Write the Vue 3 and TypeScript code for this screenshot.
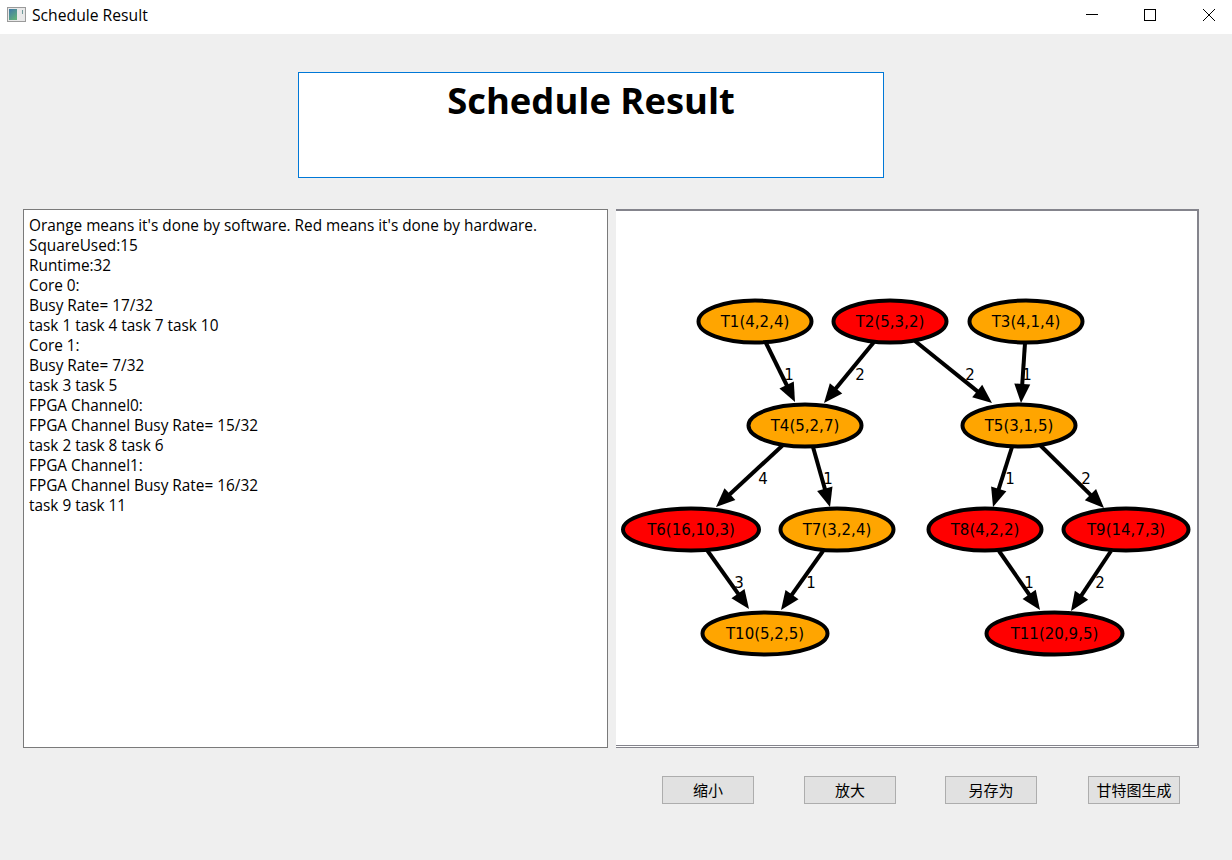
<template>
  <div class="window">
    <header class="titlebar">
      <svg class="app-icon" width="19" height="16" viewBox="0 0 19 16">
        <defs>
          <linearGradient id="appGrad" x1="0" y1="0" x2="0.6" y2="1">
            <stop offset="0" stop-color="#3f78a8" />
            <stop offset="1" stop-color="#5fae7c" />
          </linearGradient>
        </defs>
        <rect x="0.5" y="0.5" width="18" height="14" fill="#e8e8e8" stroke="#9a9a9a" />
        <rect x="2" y="2" width="8" height="11" fill="url(#appGrad)" />
        <rect x="15" y="3" width="1" height="4" fill="#6f9a9a" />
      </svg>
      <span class="window-title">Schedule Result</span>
      <div class="controls">
        <svg class="control" width="58" height="30" viewBox="0 0 58 30">
          <path d="M22 14.5h12" stroke="#000" fill="none" />
        </svg>
        <svg class="control" width="58" height="30" viewBox="0 0 58 30">
          <rect x="22.5" y="9.5" width="11" height="11" stroke="#000" fill="none" />
        </svg>
        <svg class="control" width="58" height="30" viewBox="0 0 58 30">
          <path d="M23 9l12 12M35 9l-12 12" stroke="#000" fill="none" />
        </svg>
      </div>
    </header>

    <main class="content">
      <div class="heading-box">
        <h1 class="heading">Schedule Result</h1>
      </div>

      <div class="panels">
        <div class="log">
          <div v-for="(line, i) in logLines" :key="i" class="log-line">{{ line }}</div>
        </div>
        <div class="graph">
          <svg width="581" height="534" viewBox="616 211 581 534">
            <g v-for="(e, i) in edgeShapes" :key="'e' + i">
              <line :x1="e.x1" :y1="e.y1" :x2="e.sx" :y2="e.sy" class="edge" />
              <polygon :points="e.head" fill="#000" />
              <text :x="e.lx" :y="e.ly" class="label">{{ e.label }}</text>
            </g>
            <g v-for="n in nodes" :key="n.name">
              <ellipse :cx="n.x" :cy="n.y" :rx="n.rx" ry="21" :fill="n.hw ? '#ff0000' : '#ffa500'" class="node" />
              <text :x="n.x" :y="n.y + 5.5" class="label">{{ n.name }}</text>
            </g>
          </svg>
        </div>
      </div>

      <div class="actions">
        <button class="btn">缩小</button>
        <button class="btn">放大</button>
        <button class="btn save">另存为</button>
        <button class="btn">甘特图生成</button>
      </div>
    </main>
  </div>
</template>

<script setup lang="ts">
interface GraphNode {
  name: string;
  x: number;
  y: number;
  rx: number;
  hw: boolean;
}

interface GraphEdge {
  x1: number;
  y1: number;
  x2: number;
  y2: number;
  lx: number;
  ly: number;
  label: string;
}

const logLines: string[] = [
  "Orange means it's done by software. Red means it's done by hardware.",
  'SquareUsed:15',
  'Runtime:32',
  'Core 0:',
  'Busy Rate= 17/32',
  'task 1 task 4 task 7 task 10',
  'Core 1:',
  'Busy Rate= 7/32',
  'task 3 task 5',
  'FPGA Channel0:',
  'FPGA Channel Busy Rate= 15/32',
  'task 2 task 8 task 6',
  'FPGA Channel1:',
  'FPGA Channel Busy Rate= 16/32',
  'task 9 task 11',
];

const nodes: GraphNode[] = [
  { name: 'T1(4,2,4)', x: 755, y: 321.5, rx: 56.5, hw: false },
  { name: 'T2(5,3,2)', x: 890, y: 321.5, rx: 56.5, hw: true },
  { name: 'T3(4,1,4)', x: 1026, y: 321.5, rx: 56.5, hw: false },
  { name: 'T4(5,2,7)', x: 805, y: 425.5, rx: 56.5, hw: false },
  { name: 'T5(3,1,5)', x: 1019, y: 425.5, rx: 56.5, hw: false },
  { name: 'T6(16,10,3)', x: 691, y: 529.5, rx: 68, hw: true },
  { name: 'T7(3,2,4)', x: 837, y: 529.5, rx: 56.5, hw: false },
  { name: 'T8(4,2,2)', x: 985, y: 529.5, rx: 56.5, hw: true },
  { name: 'T9(14,7,3)', x: 1126, y: 529.5, rx: 62.5, hw: true },
  { name: 'T10(5,2,5)', x: 765, y: 633.5, rx: 62.5, hw: false },
  { name: 'T11(20,9,5)', x: 1054.5, y: 633.5, rx: 68, hw: true },
];

const edges: GraphEdge[] = [
  { x1: 766, y1: 343, x2: 795, y2: 402, lx: 789, ly: 380, label: '1' },
  { x1: 874, y1: 342, x2: 824, y2: 403, lx: 860, ly: 380, label: '2' },
  { x1: 915, y1: 341, x2: 992, y2: 403, lx: 970, ly: 380, label: '2' },
  { x1: 1025, y1: 343, x2: 1021, y2: 403, lx: 1027, ly: 380, label: '1' },
  { x1: 783, y1: 445, x2: 716, y2: 507, lx: 763, ly: 484, label: '4' },
  { x1: 813, y1: 447, x2: 830, y2: 507, lx: 828, ly: 484, label: '1' },
  { x1: 1012, y1: 447, x2: 993, y2: 507, lx: 1010, ly: 484, label: '1' },
  { x1: 1040, y1: 445, x2: 1104, y2: 508, lx: 1086, ly: 484, label: '2' },
  { x1: 707, y1: 550, x2: 749, y2: 609, lx: 739, ly: 588, label: '3' },
  { x1: 823, y1: 551, x2: 781, y2: 610, lx: 811, ly: 588, label: '1' },
  { x1: 999, y1: 551, x2: 1040, y2: 610, lx: 1029, ly: 588, label: '1' },
  { x1: 1111, y1: 551, x2: 1071, y2: 611, lx: 1100, ly: 588, label: '2' },
];

const HEAD_LEN = 19;
const HEAD_HALF = 8;

// shaft stops inside the arrowhead so the tip stays sharp
const edgeShapes = edges.map((e) => {
  const len = Math.hypot(e.x2 - e.x1, e.y2 - e.y1);
  const ux = (e.x2 - e.x1) / len;
  const uy = (e.y2 - e.y1) / len;
  const bx = e.x2 - ux * HEAD_LEN;
  const by = e.y2 - uy * HEAD_LEN;
  const head = [
    `${e.x2},${e.y2}`,
    `${bx - uy * HEAD_HALF},${by + ux * HEAD_HALF}`,
    `${bx + uy * HEAD_HALF},${by - ux * HEAD_HALF}`,
  ].join(' ');
  return { ...e, sx: bx + ux * 2, sy: by + uy * 2, head };
});
</script>

<style>
html,
body {
  margin: 0;
  background: #efefef;
}
</style>

<style scoped>
.window {
  width: 1232px;
  height: 860px;
  display: flex;
  flex-direction: column;
  background: #efefef;
  font-family: 'Open Sans', 'Noto Sans', 'Noto Sans CJK SC', sans-serif;
  color: #000;
  overflow: hidden;
}

.titlebar {
  box-sizing: border-box;
  height: 34px;
  flex: none;
  display: flex;
  align-items: center;
  background: #fff;
  padding: 0 0 4px 7px;
}

.app-icon {
  flex: none;
  margin-right: 6px;
}

.window-title {
  font-size: 15.7px;
}

.controls {
  margin-left: auto;
  display: flex;
  align-self: flex-start;
  margin-right: -6px;
}

.control {
  display: block;
}

.content {
  flex: 1;
  display: flex;
  flex-direction: column;
  padding: 38px 33px 0 23px;
}

.heading-box {
  align-self: flex-start;
  margin-left: 275px;
  width: 584px;
  height: 104px;
  border: 1px solid #0078d7;
  background: #fff;
  text-align: center;
}

.heading {
  margin: 0;
  font-size: 36.4px;
  line-height: 54px;
  font-weight: 700;
}

.panels {
  display: flex;
  gap: 8px;
  margin-top: 31px;
}

.log {
  box-sizing: border-box;
  width: 585px;
  height: 539px;
  border: 1px solid #7a7a7a;
  background: #fff;
  padding: 6px 5px;
  font-size: 15.36px;
  line-height: 20px;
}

.log-line {
  white-space: pre;
}

.graph {
  box-sizing: border-box;
  width: 583px;
  height: 539px;
  background: #fff;
  border-top: 2px solid #84848c;
  border-right: 2px solid #84848c;
  border-bottom: 3px double #84848c;
}

.graph svg {
  display: block;
}

.edge {
  stroke: #000;
  stroke-width: 4;
}

.node {
  stroke: #000;
  stroke-width: 4;
}

.label {
  font-family: 'DejaVu Sans', sans-serif;
  font-size: 15px;
  text-anchor: middle;
  fill: #000;
}

.actions {
  display: flex;
  gap: 50px;
  margin-top: 28px;
  padding-left: 639px;
}

.btn {
  width: 92px;
  height: 28px;
  padding: 0 0 2px;
  border: 1px solid #adadad;
  background: #e1e1e1;
  font-family: 'Noto Sans CJK SC', sans-serif;
  font-size: 15px;
  color: #000;
}

.save {
  margin: 0 1px 0 -1px;
}
</style>
